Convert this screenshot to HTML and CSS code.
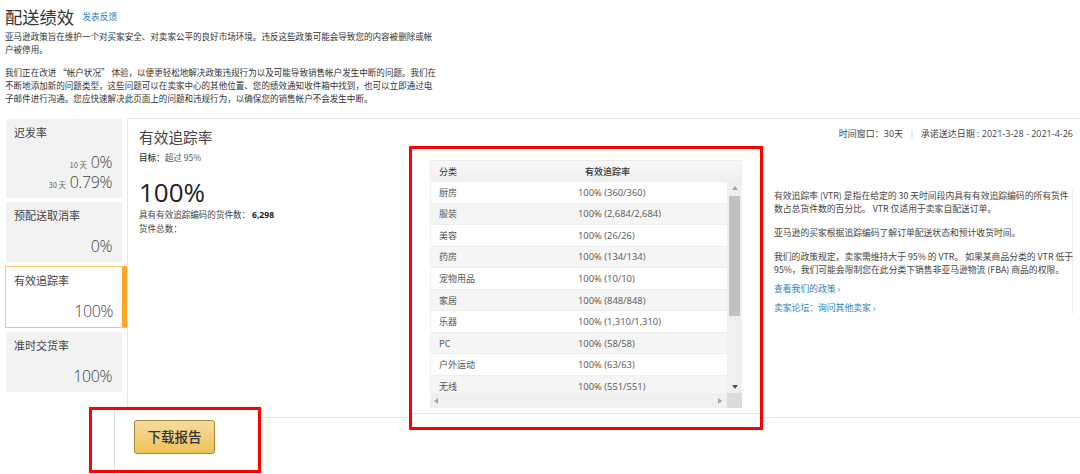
FILE: index.html
```html
<!DOCTYPE html>
<html lang="zh">
<head>
<meta charset="utf-8">
<title>配送绩效</title>
<link rel="stylesheet" href="styles.css">
</head>
<body>
<header class="intro">
  <div class="heading"><h1>配送绩效</h1><a class="link feedback" href="#">发表反馈</a></div>
  <p>亚马逊政策旨在维护一个对买家安全、对卖家公平的良好市场环境。违反这些政策可能会导致您的内容被删除或帐<br>户被停用。</p>
  <p>我们正在改进 “帐户状况” 体验，以便更轻松地解决政策违规行为以及可能导致销售帐户发生中断的问题。我们在<br>不断地添加新的问题类型，这些问题可以在卖家中心的其他位置、您的绩效通知收件箱中找到，也可以立即通过电<br>子邮件进行沟通。您应快速解决此页面上的问题和违规行为，以确保您的销售帐户不会发生中断。</p>
</header>
<div class="body-row">
  <nav class="tiles">
    <div class="tile tile-late">
      <div class="tile-name">迟发率</div>
      <div class="tile-values">
        <div><small>10 天</small> 0%</div>
        <div><small>30 天</small> 0.79%</div>
      </div>
    </div>
    <div class="tile tile-cancel">
      <div class="tile-name">预配送取消率</div>
      <div class="tile-values"><div>0%</div></div>
    </div>
    <div class="tile tile-active">
      <div class="tile-name">有效追踪率</div>
      <div class="tile-values"><div>100%</div></div>
    </div>
    <div class="tile tile-ontime">
      <div class="tile-name">准时交货率</div>
      <div class="tile-values"><div>100%</div></div>
    </div>
  </nav>
  <main class="panel">
    <div class="panel-left">
      <h2>有效追踪率</h2>
      <div class="target"><b>目标：</b>超过 95%</div>
      <div class="big">100%</div>
      <div class="counts">具有有效追踪编码的货件数： <b>6,298</b><br>货件总数：</div>
    </div>
    <div class="panel-center">
      <div class="grid">
        <div class="grid-head"><span class="col-a">分类</span><span class="col-b">有效追踪率</span></div>
        <div class="grid-middle">
          <div class="rows">
            <div class="row"><span class="col-a">厨房</span><span class="col-v">100% (360/360)</span></div>
            <div class="row alt"><span class="col-a">服装</span><span class="col-v">100% (2,684/2,684)</span></div>
            <div class="row"><span class="col-a">美容</span><span class="col-v">100% (26/26)</span></div>
            <div class="row alt"><span class="col-a">药房</span><span class="col-v">100% (134/134)</span></div>
            <div class="row"><span class="col-a">宠物用品</span><span class="col-v">100% (10/10)</span></div>
            <div class="row alt"><span class="col-a">家居</span><span class="col-v">100% (848/848)</span></div>
            <div class="row"><span class="col-a">乐器</span><span class="col-v">100% (1,310/1,310)</span></div>
            <div class="row alt"><span class="col-a">PC</span><span class="col-v">100% (58/58)</span></div>
            <div class="row"><span class="col-a">户外运动</span><span class="col-v">100% (63/63)</span></div>
            <div class="row alt"><span class="col-a">无线</span><span class="col-v">100% (551/551)</span></div>
          </div>
          <div class="vscroll">
            <i class="arrow up"></i>
            <div class="track"><div class="thumb"></div></div>
            <i class="arrow down"></i>
          </div>
        </div>
        <div class="hscroll">
          <div class="hbar"><i class="arrow left"></i><i class="arrow right"></i></div>
          <div class="corner"></div>
        </div>
      </div>
    </div>
    <div class="panel-right">
      <div class="meta">时间窗口：30天 <span class="sep">|</span> 承诺送达日期 : 2021-3-28 - 2021-4-26</div>
      <div class="help">
        <p>有效追踪率 (VTR) 是指在给定的 30 天时间段内具有有效追踪编码的所有货件<br>数占总货件数的百分比。 VTR 仅适用于卖家自配送订单。</p>
        <p>亚马逊的买家根据追踪编码了解订单配送状态和预计收货时间。</p>
        <p class="last">我们的政策规定，卖家需维持大于 95% 的 VTR。 如果某商品分类的 VTR 低于<br>95%，我们可能会限制您在此分类下销售非亚马逊物流 (FBA) 商品的权限。</p>
        <a class="link help-link" href="#">查看我们的政策 ›</a>
        <a class="link help-link" href="#">卖家论坛：询问其他卖家 ›</a>
      </div>
    </div>
  </main>
</div>
<footer class="footer">
  <div class="footer-action"><button class="download" type="button">下载报告</button></div>
  <div class="footer-rest"></div>
</footer>
<div class="mark mark-table"></div>
<div class="mark mark-button"></div>
</body>
</html>
```
FILE: styles.css
```css
* { box-sizing: border-box; }
html, body { margin: 0; height: 474px; overflow: hidden; background: #fff; }
body {
  position: relative;
  font-family: "Noto Sans CJK SC", "Open Sans", sans-serif;
  font-size: 8.55px;
  line-height: 13px;
  color: #333;
}
.link { color: #2f7fb8; text-decoration: none; }
.intro { height: 118px; padding: 3px 0 0 5px; }
.heading { display: flex; align-items: center; height: 27px; }
h1 { margin: 0; font-size: 17.3px; font-weight: 400; line-height: 27px; color: #333; }
.feedback { margin-left: 8px; font-size: 8.75px; }
.intro p { margin: 0 0 10px; width: 440px; white-space: nowrap; }

.body-row { display: flex; height: 289px; }
.tiles { width: 127px; padding-top: 1px; display: flex; flex-direction: column; align-items: flex-start; gap: 4px; padding-left: 5px; }
.tile { width: 116px; margin-left: 1px; background: #f2f2f2; padding: 4.5px 10px 6px 8px; display: flex; flex-direction: column; justify-content: space-between; font-family: "Open Sans", "Noto Sans CJK SC", sans-serif; }
.tile-name { font-family: "Noto Sans CJK SC", sans-serif; font-size: 11px; line-height: 16px; color: #444; }
.tile-values { text-align: right; font-size: 16px; font-weight: 300; letter-spacing: -0.4px; line-height: 20px; color: #3f3f3f; }
.tile-values > div { height: 20px; }
.tile-values small { font-size: 7.5px; line-height: 1; letter-spacing: 0; font-weight: 400; font-family: "Noto Sans CJK SC", sans-serif; color: #666; }
.tile-late { height: 79px; }
.tile-cancel { height: 60px; }
.tile-ontime { height: 60px; }
.tile-active {
  width: 122px; height: 62px; margin-left: 0; background: #fff;
  border: 1px solid #f7c66f; border-right: 5px solid #fda625; padding-left: 8px; padding-right: 9px; padding-top: 4.5px;
}

.panel { flex: 1; display: flex; border-left: 1px solid #e6e6e6; border-top: 1px solid #e6e6e6; min-width: 0; }
.panel-left { width: 302px; padding: 8px 0 0 11px; }
h2 { margin: 0; font-size: 14.7px; font-weight: 400; line-height: 20px; color: #444; }
.target { margin-top: 4px; color: #555; }
.target b { font-weight: 500; color: #333; }
.big { margin-top: 13px; font-family: "Open Sans", sans-serif; font-size: 26px; line-height: 30px; color: #222; }
.counts { margin-top: 1px; line-height: 12.5px; color: #444; }
.counts b { font-family: "Open Sans", sans-serif; font-weight: 700; color: #222; }

.panel-center { width: 312px; padding-top: 41px; }
.grid { width: 312px; height: 248px; display: flex; flex-direction: column; background: #f0f0f0; }
.grid-head { height: 22px; flex: none; display: flex; align-items: center; background: linear-gradient(#f8f8f8, #f0f0f0); border: 1px solid #ececec; color: #333; font-size: 9px; }
.grid-head .col-a { padding-left: 8px; width: 154px; }
.grid-head .col-b { font-weight: 500; }
.grid-middle { flex: 1; display: flex; min-height: 0; }
.rows { width: 296px; margin-left: 1px; overflow: hidden; background: #fff; }
.row { height: 21.55px; display: flex; align-items: center; border-bottom: 1px solid #eee; background: #fff; color: #555; font-size: 9px; }
.row.alt { background: #f5f5f5; }
.row .col-a { width: 147px; padding-left: 8px; }
.row .col-v { font-family: "Open Sans", sans-serif; font-size: 9.4px; }
.vscroll { width: 15px; display: flex; flex-direction: column; background: #f0f0f0; }
.track { flex: 1; padding: 2px 2px 0 2px; }
.thumb { height: 120px; background: #c1c1c1; }
.arrow { display: block; width: 0; height: 0; border: 3px solid transparent; flex: none; }
.vscroll .arrow { margin: 4px auto; }
.up { border-top: 0; border-bottom: 4px solid #a3a3a3; }
.down { border-bottom: 0; border-top: 4px solid #505050; }
.hscroll { height: 15px; flex: none; display: flex; }
.hbar { flex: 1; display: flex; justify-content: space-between; align-items: center; padding: 0 5px 0 4px; }
.left { border-left: 0; border-right: 4px solid #a3a3a3; }
.right { border-right: 0; border-left: 4px solid #a3a3a3; }
.corner { width: 15px; background: #dcdcdc; }

.panel-right { flex: 1; padding-top: 8px; min-width: 0; }
.meta { text-align: right; padding-right: 7px; font-family: "Open Sans", "Noto Sans CJK SC", sans-serif; font-size: 9px; color: #444; white-space: nowrap; }
.sep { color: #ccc; margin: 0 4px; }
.help { margin: 49px 0 0 32px; width: 299px; border-right: 1px solid #eee; font-size: 8.8px; color: #444; white-space: nowrap; }
.help p { margin: 0 0 11px; }
.help p.last { margin-bottom: 6px; }
.help-link { display: block; margin-bottom: 6px; }

.footer { height: 67px; display: flex; }
.footer-action { width: 147px; margin-left: 114px; border-left: 1px solid #e0e0e0; padding: 13px 0 0 19px; }
.footer-rest { flex: 1; margin-top: 10px; border-top: 1px solid #e6e6e6; }
.download {
  display: block; width: 81px; height: 34px; padding: 0; font: 500 13.5px/1 "Noto Sans CJK SC", sans-serif; color: #333;
  background: linear-gradient(#f6dca0, #efc257); border: 1px solid #a88734; border-radius: 3px;
}

.mark { position: absolute; border: 3px solid #f00; pointer-events: none; }
.mark-table { left: 409px; top: 146px; width: 354px; height: 284px; }
.mark-table::after { content: ""; position: absolute; left: 0; right: 0; top: 264px; bottom: 0; background: #fff; border-top: 1px solid #e6e6e6; }
.mark-button { left: 89px; top: 407px; width: 172px; height: 66px; }
```
